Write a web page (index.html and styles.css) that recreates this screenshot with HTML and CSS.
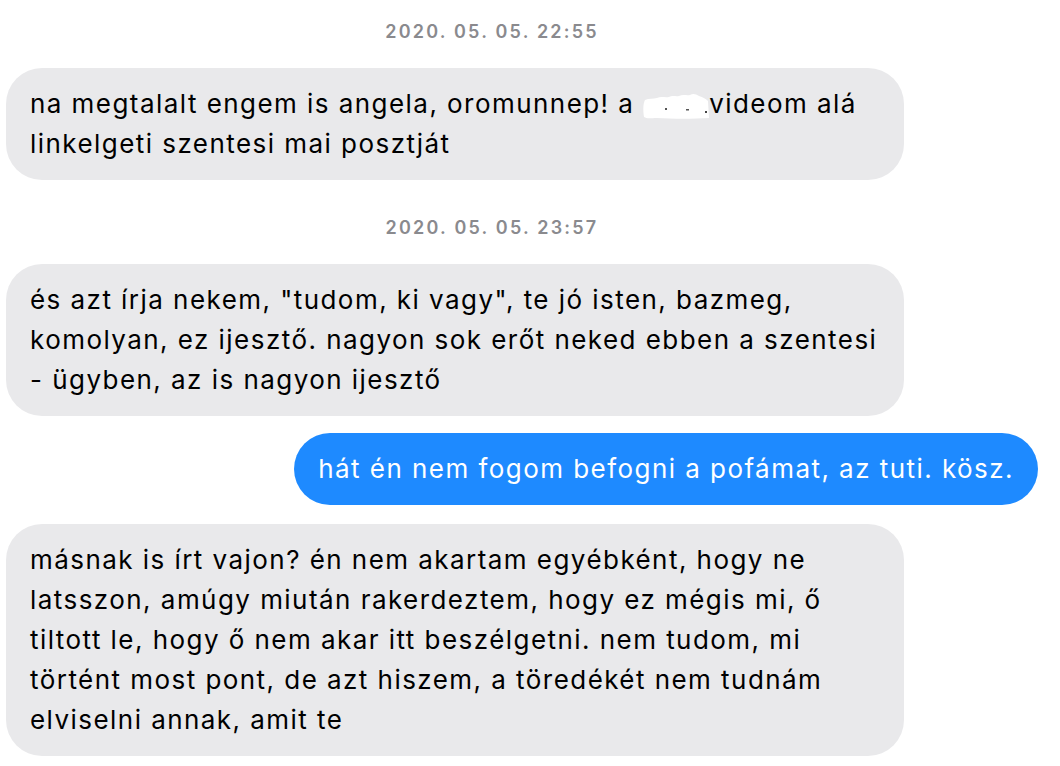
FILE: index.html
```html
<!DOCTYPE html>
<html lang="hu">
<head>
<meta charset="utf-8">
<link rel="stylesheet" href="styles.css">
</head>
<body>
<div class="chat">
  <div class="stamp">2020. 05. 05. 22:55</div>
  <div class="row in">
    <div class="bubble gray">na megtalalt engem is angela, oromunnep! a <svg class="redact" width="66" height="28" viewBox="0 0 66 28"><path d="M2 8 C6 6 10 7 14 6 C18 4 22 6 26 5 C30 3 33 5 36 4 C40 2 44 4 47 3 C50 1 53 2 56 4 C60 5 63 7 65 9 L66 26 C50 27 30 27 14 26 C8 26 4 27 1 25 C0 18 0 12 2 8 Z" fill="#ffffff"/><rect x="22" y="16" width="2" height="2" fill="#555"/><rect x="43" y="17" width="3" height="1.5" fill="#555"/><rect x="62" y="19" width="2" height="2" fill="#444"/></svg>videom alá<br>linkelgeti szentesi mai posztját</div>
  </div>
  <div class="stamp later">2020. 05. 05. 23:57</div>
  <div class="row in">
    <div class="bubble gray">és azt írja nekem, "tudom, ki vagy", te jó isten, bazmeg,<br>komolyan, ez ijesztő. nagyon sok erőt neked ebben a szentesi<br>- ügyben, az is nagyon ijesztő</div>
  </div>
  <div class="row out">
    <div class="bubble blue">hát én nem fogom befogni a pofámat, az tuti. kösz.</div>
  </div>
  <div class="row in">
    <div class="bubble gray">másnak is írt vajon? én nem akartam egyébként, hogy ne<br>latsszon, amúgy miután rakerdeztem, hogy ez mégis mi, ő<br>tiltott le, hogy ő nem akar itt beszélgetni. nem tudom, mi<br>történt most pont, de azt hiszem, a töredékét nem tudnám<br>elviselni annak, amit te</div>
  </div>
</div>
</body>
</html>
```
FILE: styles.css
```css
html, body {
  margin: 0;
  padding: 0;
  background: #ffffff;
}
body {
  font-family: Inter, "Noto Sans", "Liberation Sans", sans-serif;
  width: 1060px;
  height: 766px;
  overflow: hidden;
}
.chat {
  display: flex;
  flex-direction: column;
  padding: 20px 22px 0 6px;
}
.stamp {
  text-align: center;
  color: #8a8a8e;
  font-size: 18px;
  font-weight: 600;
  letter-spacing: 2.2px;
  line-height: 24px;
  margin-bottom: 24px;
  padding-right: 60px;
}
.stamp.later {
  margin-top: 36px;
}
.row {
  display: flex;
}
.row.out {
  justify-content: flex-end;
  margin: 17px 0 19px;
}
.bubble {
  font-size: 26px;
  line-height: 40px;
  padding: 16px 24px;
  border-radius: 36px;
  white-space: nowrap;
  letter-spacing: 1.45px;
}
.gray {
  background: #e9e9eb;
  color: #000000;
  width: 850px;
}
.blue {
  background: #1e8aff;
  color: #ffffff;
  padding: 16px 24px;
}
.redact {
  display: inline-block;
  vertical-align: -7px;
  margin-right: 0;
}
```
